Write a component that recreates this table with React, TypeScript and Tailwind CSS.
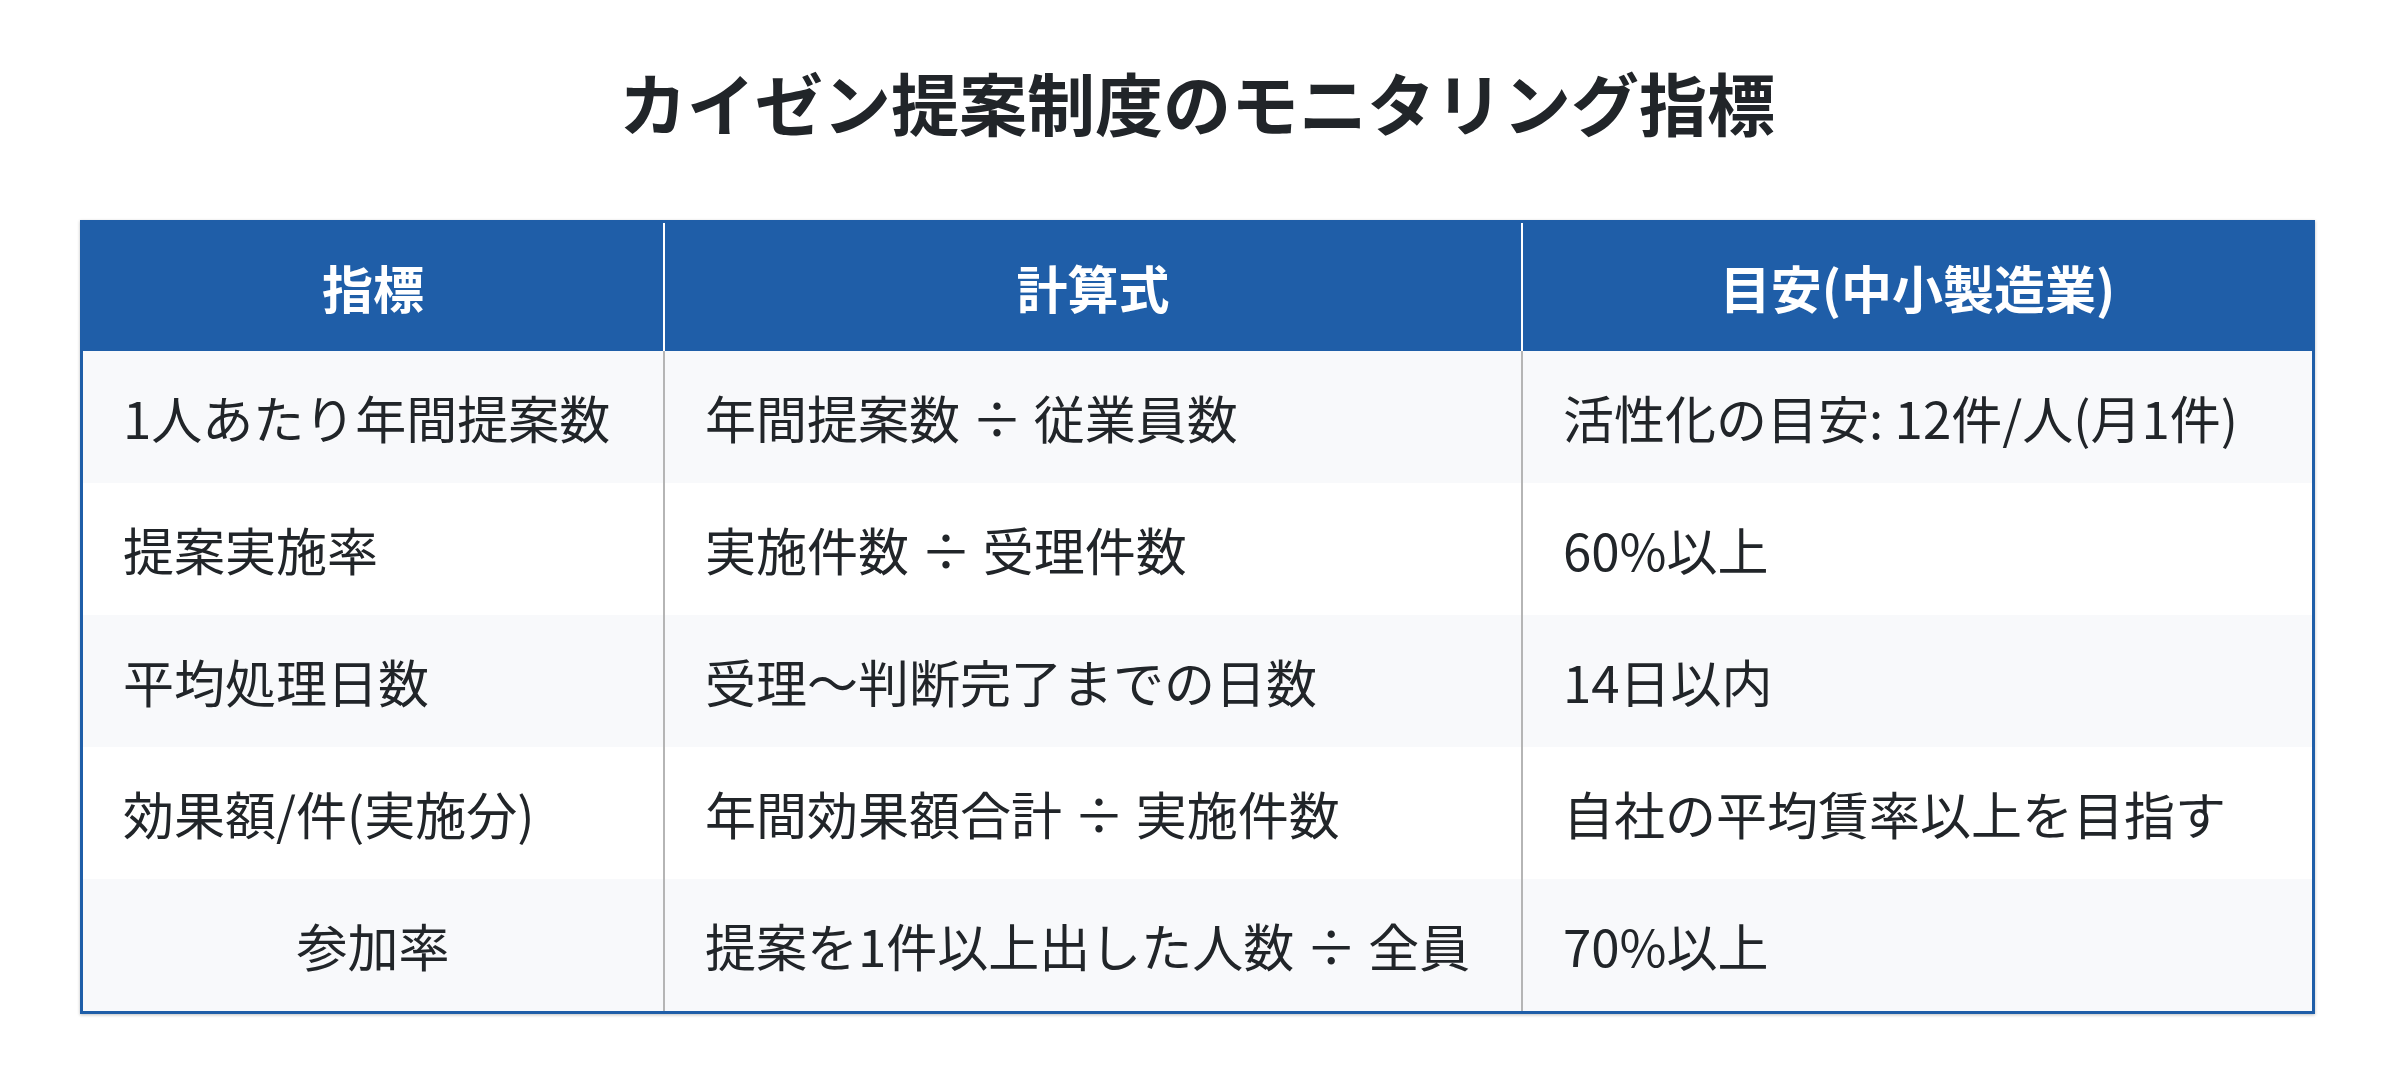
const rows = [
  { metric: "1人あたり年間提案数", formula: "年間提案数 ÷ 従業員数", target: "活性化の目安: 12件/人(月1件)" },
  { metric: "提案実施率", formula: "実施件数 ÷ 受理件数", target: "60%以上" },
  { metric: "平均処理日数", formula: "受理〜判断完了までの日数", target: "14日以内" },
  { metric: "効果額/件(実施分)", formula: "年間効果額合計 ÷ 実施件数", target: "自社の平均賃率以上を目指す" },
  { metric: "参加率", formula: "提案を1件以上出した人数 ÷ 全員", target: "70%以上", center: true },
];

export default function App() {
  return (
    <div className="min-h-screen bg-white px-[80px] pt-[51px] text-[#212529] [font-family:'Noto_Sans_CJK_JP','Noto_Sans',sans-serif]">
      {/* Title */}
      <h1 className="mb-[67px] text-center text-[68px] font-bold leading-[102px] text-[#212529]">
        カイゼン提案制度のモニタリング指標
      </h1>

      {/* Table */}
      <div className="w-[2235px] border-[3px] border-[#1f5ea8] shadow-[0_1px_3px_rgba(0,0,0,0.25)]">
        <table className="w-full table-fixed border-collapse">
          <colgroup>
            <col className="w-[581px]" />
            <col className="w-[858px]" />
            <col />
          </colgroup>
          <thead>
            <tr className="bg-[#1f5ea8] text-white">
              <th className="h-[128px] border-r-2 border-white px-[40px] text-center text-[51px] font-bold">指標</th>
              <th className="h-[128px] border-r-2 border-white px-[40px] text-center text-[51px] font-bold">計算式</th>
              <th className="h-[128px] px-[40px] text-center text-[51px] font-bold">目安(中小製造業)</th>
            </tr>
          </thead>
          <tbody>
            {rows.map((r, i) => (
              <tr key={r.metric} className={i % 2 === 0 ? "bg-[#f8f9fb]" : "bg-white"}>
                <td className={`h-[132px] border-r-2 border-[#b5b5b5] px-[40px] text-[51px] font-normal whitespace-nowrap ${r.center ? "text-center" : "text-left"}`}>
                  {r.metric}
                </td>
                <td className="h-[132px] border-r-2 border-[#b5b5b5] px-[40px] text-[51px] font-normal whitespace-nowrap">
                  {r.formula}
                </td>
                <td className="h-[132px] px-[40px] text-[51px] font-normal whitespace-nowrap">
                  {r.target}
                </td>
              </tr>
            ))}
          </tbody>
        </table>
      </div>
    </div>
  );
}
